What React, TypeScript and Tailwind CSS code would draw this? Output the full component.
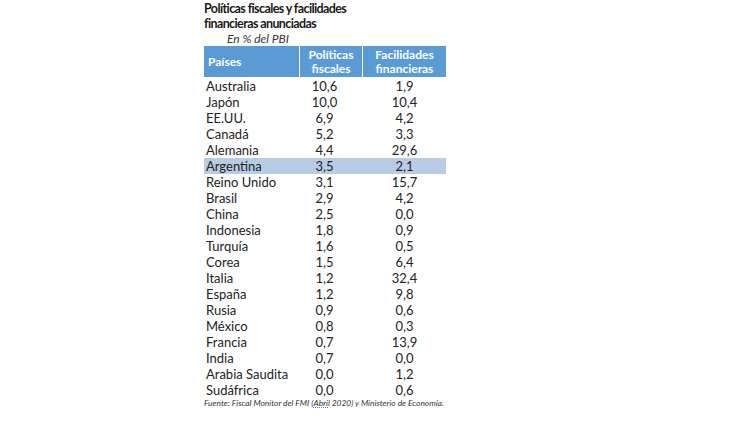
const rows: [string, string, string][] = [
  ["Australia", "10,6", "1,9"],
  ["Japón", "10,0", "10,4"],
  ["EE.UU.", "6,9", "4,2"],
  ["Canadá", "5,2", "3,3"],
  ["Alemania", "4,4", "29,6"],
  ["Argentina", "3,5", "2,1"],
  ["Reino Unido", "3,1", "15,7"],
  ["Brasil", "2,9", "4,2"],
  ["China", "2,5", "0,0"],
  ["Indonesia", "1,8", "0,9"],
  ["Turquía", "1,6", "0,5"],
  ["Corea", "1,5", "6,4"],
  ["Italia", "1,2", "32,4"],
  ["España", "1,2", "9,8"],
  ["Rusia", "0,9", "0,6"],
  ["México", "0,8", "0,3"],
  ["Francia", "0,7", "13,9"],
  ["India", "0,7", "0,0"],
  ["Arabia Saudita", "0,0", "1,2"],
  ["Sudáfrica", "0,0", "0,6"],
];

export default function App() {
  return (
    <div className="w-[730px] h-[425px] bg-white text-[#222] font-['Lato','Open_Sans',sans-serif]">
      <div className="ml-[204px] w-[242px]">
        <div className="pt-px text-[12.5px] font-bold leading-[15px] tracking-[-0.6px] text-[#1a1a1a]">
          Políticas fiscales y facilidades
          <br />
          financieras anunciadas
        </div>
        <div className="pl-[23px] text-[12px] italic leading-[15px] text-[#333]">En % del PBI</div>

        <div className="flex h-[31px] bg-[#5b9bd5] text-white text-[12px] font-bold leading-[14px]">
          <div className="w-[96px] flex items-center pl-[4px] border-r border-white">Países</div>
          <div className="w-[63px] flex items-center justify-center text-center border-r border-white">
            Políticas
            <br />
            fiscales
          </div>
          <div className="flex-1 flex items-center justify-center text-center">
            Facilidades
            <br />
            financieras
          </div>
        </div>

        <div className="pt-px">
          {rows.map(([pais, fiscal, fin]) => (
            <div
              key={pais}
              className={
                "flex h-[16px] items-center text-[13px] leading-[15px] " +
                (pais === "Argentina" ? "bg-[#b8cce4]" : "")
              }
            >
              <div className="w-[96px] pl-[2px]">{pais}</div>
              <div className="w-[63px] text-center pr-[14px]">{fiscal}</div>
              <div className="flex-1 text-center">{fin}</div>
            </div>
          ))}
        </div>

        <div className="text-[8.4px] italic leading-[10px] text-[#333] whitespace-nowrap">
          Fuente: Fiscal Monitor del FMI (
          <span className="underline decoration-dotted decoration-[#4a7bd0]">Abril</span> 2020) y Ministerio de
          Economía.
        </div>
      </div>
    </div>
  );
}
